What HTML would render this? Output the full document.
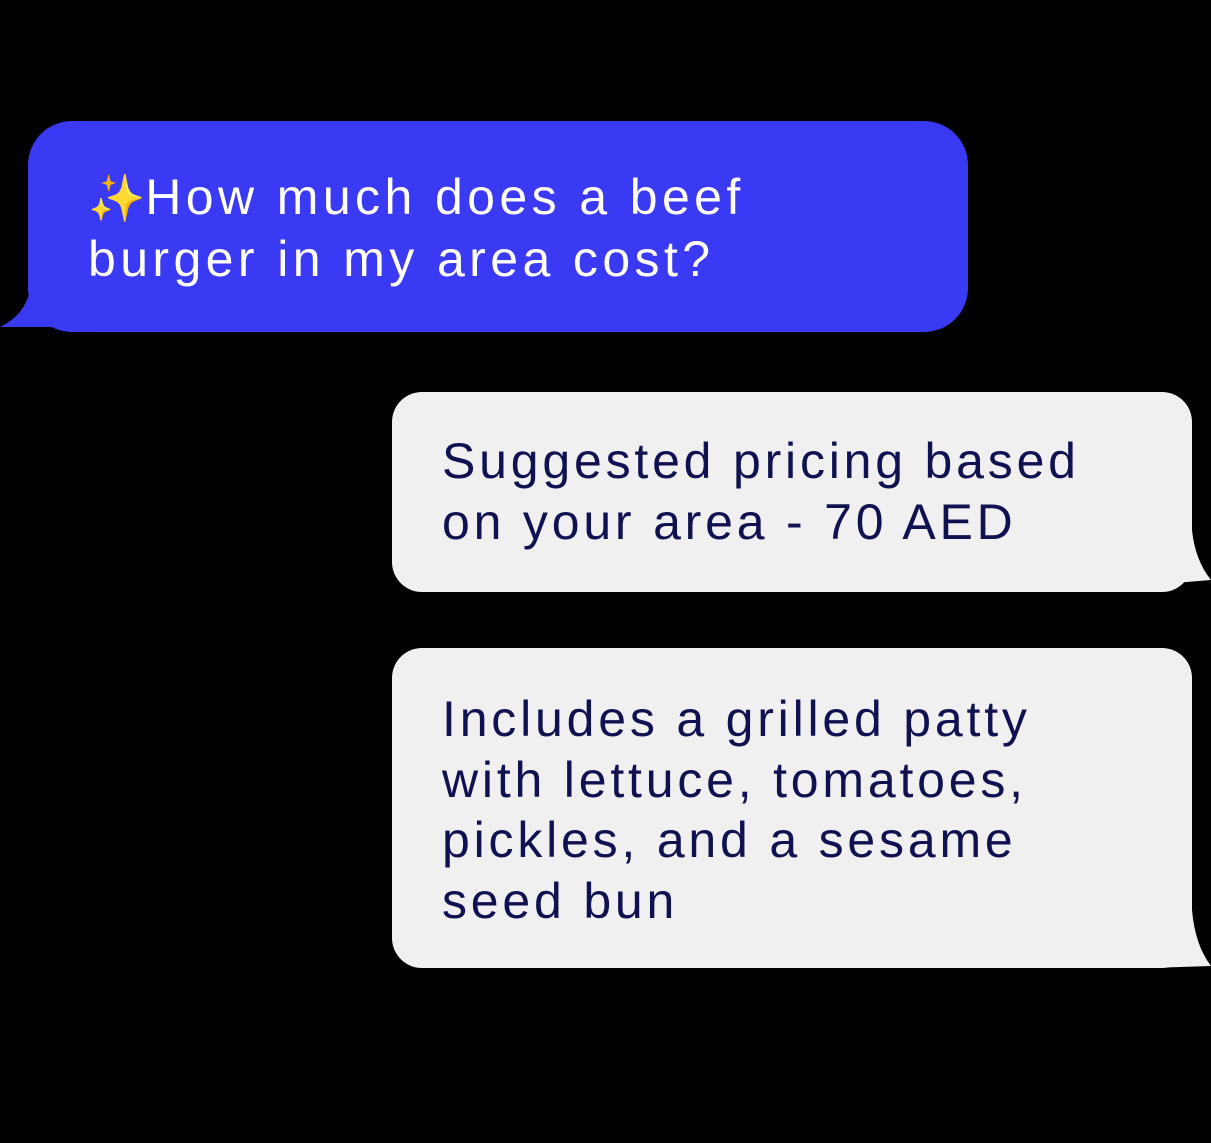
<!DOCTYPE html>
<html><head><meta charset="utf-8"><style>
html,body{margin:0;padding:0;background:#000;width:1211px;height:1143px;overflow:hidden;position:relative;font-family:"Liberation Sans","DejaVu Sans",sans-serif}
.b{position:absolute;border-radius:44px}
.t{position:absolute;font-size:50px;letter-spacing:3.8px;line-height:60.5px;white-space:nowrap}
</style></head><body>
<svg width="1211" height="1143" style="position:absolute;left:0;top:0">
<path d="M30 270 L30 290 Q25 315 0 327 L60 327 Z" fill="#3a3af5"/>
<path d="M1150 530 L1192 530 Q1195 560 1211 580 L1150 585 Z" fill="#f0f0f0"/>
<path d="M1150 910 L1192 910 Q1195 945 1211 966 L1150 968 Z" fill="#f0f0f0"/>
</svg>
<div class="b" style="left:28px;top:121px;width:940px;height:211px;background:#3a3af5"></div>
<div class="t" style="left:88px;top:167px;color:#fff;letter-spacing:4.4px"><span style="color:#f7c83a;font-size:46px;letter-spacing:0">✨</span>How much does a beef<br>burger in my area cost?</div>
<div class="b" style="left:392px;top:392px;width:800px;height:200px;background:#f0f0f0;border-radius:30px"></div>
<div class="t" style="left:442px;top:431px;color:#0f1150">Suggested pricing based<br>on your area - 70 AED</div>
<div class="b" style="left:392px;top:648px;width:800px;height:320px;background:#f0f0f0;border-radius:30px"></div>
<div class="t" style="left:442px;top:689px;color:#0f1150">Includes a grilled patty<br>with lettuce, tomatoes,<br>pickles, and a sesame<br>seed bun</div>
</body></html>
